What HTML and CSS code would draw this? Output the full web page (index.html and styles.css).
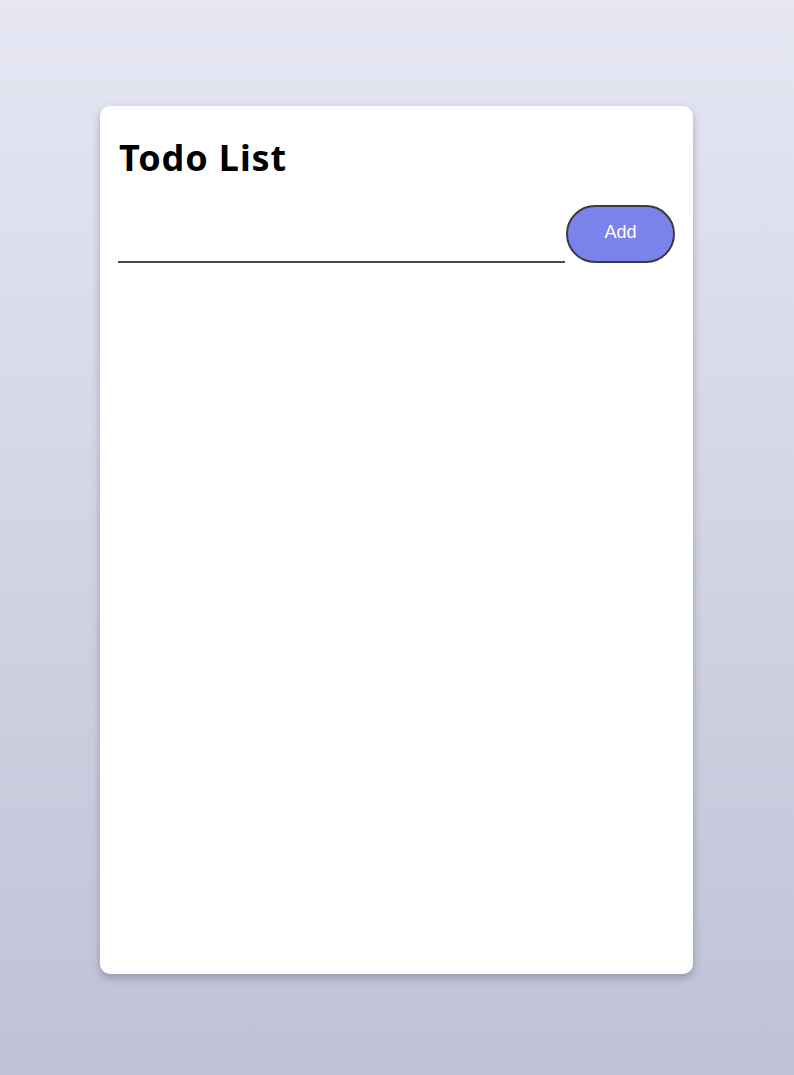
FILE: index.html
```html
<!DOCTYPE html>
<html>
<head>
<meta charset="utf-8">
<link rel="stylesheet" href="styles.css">
</head>
<body>
<div class="card">
  <h1 class="title">Todo List</h1>
  <div class="row">
    <input class="todo-input" type="text">
    <button class="add-btn">Add</button>
  </div>
  <ul class="list"></ul>
</div>
</body>
</html>
```
FILE: styles.css
```css
html, body {
  margin: 0;
  height: 100%;
}
body {
  background: linear-gradient(180deg, #e6e7f3 0%, #bfc2d6 100%);
  font-family: "Noto Sans", sans-serif;
  padding-top: 106px;
  box-sizing: border-box;
}
.card {
  width: 593px;
  height: 868px;
  margin: 0 0 0 100px;
  background: #fff;
  border-radius: 10px;
  box-shadow: 0 4px 8px rgba(60, 60, 80, 0.35);
  padding: 18px 18px 18px 18px;
  box-sizing: border-box;
}
.title {
  margin: 10px 0 23px 1px;
  font-size: 36px;
  font-weight: 700;
  letter-spacing: 0.9px;
  line-height: 48px;
  color: #000;
}
.row {
  display: flex;
  align-items: flex-end;
}
.todo-input {
  flex: 1;
  border: none;
  border-bottom: 2px solid #4a4a52;
  height: 40px;
  outline: none;
  margin: 0;
  padding: 0;
  font-size: 16px;
}
.add-btn {
  width: 109px;
  height: 58px;
  margin-left: 1px;
  padding: 0 0 3px 0;
  border-radius: 29px;
  border: 2px solid #3a3a44;
  background: #7b83eb;
  color: #fff;
  font-family: "Liberation Sans", Arial, sans-serif;
  font-size: 18px;
}
.list {
  margin: 0;
  padding: 0;
  list-style: none;
}
```
